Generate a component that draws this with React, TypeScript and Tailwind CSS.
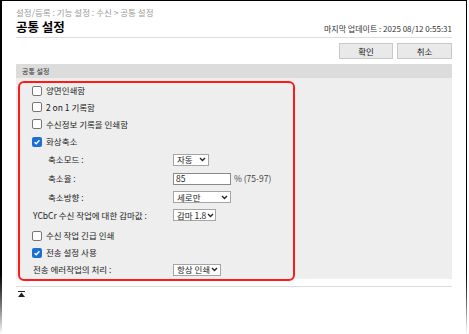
import React from "react";

const Check = ({ checked }: { checked?: boolean }) =>
  checked ? (
    <span className="flex size-[10px] shrink-0 items-center justify-center rounded-[2px] bg-[#1a6fd6]">
      <svg viewBox="0 0 10 10" className="size-[8px]">
        <path d="M2 5.2 L4.1 7.2 L8 2.8" fill="none" stroke="#fff" strokeWidth="1.8" />
      </svg>
    </span>
  ) : (
    <span className="size-[10px] shrink-0 rounded-[2px] border border-[#767676] bg-white" />
  );

const Chevron = () => (
  <svg viewBox="0 0 8 6" className="h-[5px] w-[7px] shrink-0">
    <path d="M1 1.2 L4 4.2 L7 1.2" fill="none" stroke="#222" strokeWidth="1.6" />
  </svg>
);

const Select = ({ value, width }: { value: string; width: string }) => (
  <div
    className={`flex h-[12px] items-center justify-between gap-[1px] whitespace-nowrap border border-[#a5a5a5] bg-white pl-[3px] pr-[2px] text-[8.5px] leading-none text-[#222] ${width}`}
  >
    <span>{value}</span>
    <Chevron />
  </div>
);

const CheckRow = ({ label, checked, h }: { label: string; checked?: boolean; h: string }) => (
  <div className={`flex items-center gap-[4px] pl-[16px] ${h}`}>
    <Check checked={checked} />
    <span>{label}</span>
  </div>
);

const FieldRow = ({
  label,
  indent,
  h,
  children,
}: {
  label: string;
  indent?: boolean;
  h: string;
  children: React.ReactNode;
}) => (
  <div className={`flex items-center pl-[17px] ${h}`}>
    <span className={`w-[140px] shrink-0 ${indent ? "pl-[15px]" : ""}`}>{label}</span>
    {children}
  </div>
);

export default function App() {
  return (
    <div className="relative flex h-[334px] w-[469px] bg-white font-['Noto_Sans_CJK_KR',sans-serif] text-[#222]">
      <div className="w-[2px] shrink-0 bg-linear-to-b from-black from-80% to-white" />
      <div className="flex w-[464px] flex-col border-t border-black px-[14px]">
        <div className="mt-[4px] h-[14px] text-[8.5px] leading-[14px] text-[#9a9a9a]">
          설정/등록 : 기능 설정 : 수신 &gt; 공통 설정
        </div>
        <div className="flex h-[19px] items-end justify-between border-b border-[#dcdcdc] pb-[2px]">
          <h1 className="text-[12.5px] font-bold leading-[16px] text-black">공통 설정</h1>
          <span className="text-[8px] leading-[12px] text-[#333]">마지막 업데이트 : 2025 08/12 0:55:31</span>
        </div>
        <div className="mt-[5px] flex justify-end gap-[4px]">
          <button className="h-[16px] w-[54px] border border-[#c8c8c8] bg-[#e9e9e9] text-[8.5px] leading-none text-[#222]">
            확인
          </button>
          <button className="h-[16px] w-[55px] border border-[#c8c8c8] bg-[#e9e9e9] text-[8.5px] leading-none text-[#222]">
            취소
          </button>
        </div>
        <div className="mt-[5px] flex h-[14px] items-center bg-[#dcdcdc] pl-[6px] text-[7px] text-[#333]">
          공통 설정
        </div>
        <div className="flex flex-col bg-[#eeeeee] pt-[4px] pb-[1px] text-[8.5px] leading-none">
          <CheckRow label="양면인쇄함" h="h-[17px]" />
          <CheckRow label="2 on 1 기록함" h="h-[16px]" />
          <CheckRow label="수신정보 기록을 인쇄함" h="h-[18px]" />
          <CheckRow label="화상축소" checked h="h-[17px]" />
          <FieldRow label="축소모드 :" indent h="h-[19px]">
            <Select value="자동" width="w-[36px]" />
          </FieldRow>
          <FieldRow label="축소율 :" indent h="h-[19px]">
            <div className="flex h-[12px] w-[58px] items-center border border-[#8a8a8a] bg-white pl-[2px]">85</div>
            <span className="ml-[3px] text-[#444]">% (75-97)</span>
          </FieldRow>
          <FieldRow label="축소방향 :" indent h="h-[18px]">
            <Select value="세로만" width="w-[58px]" />
          </FieldRow>
          <FieldRow label="YCbCr 수신 작업에 대한 감마값 :" h="h-[18px]">
            <Select value="감마 1.8" width="w-[43px]" />
          </FieldRow>
          <div className="h-[3px]" />
          <CheckRow label="수신 작업 긴급 인쇄" h="h-[17px]" />
          <CheckRow label="전송 설정 사용" checked h="h-[17px]" />
          <FieldRow label="전송 에러작업의 처리 :" h="h-[17px]">
            <Select value="항상 인쇄" width="w-[48px]" />
          </FieldRow>
        </div>
        <div className="mt-[7px] border-t border-[#dcdcdc] pt-[4px] pl-[2px]">
          <svg viewBox="0 0 7 6" className="h-[6px] w-[7px]">
            <rect x="0" y="0" width="7" height="1" fill="#222" />
            <path d="M3.5 1.5 L7 6 L0 6 Z" fill="#222" />
          </svg>
        </div>
      </div>
      <div className="w-[1px] shrink-0 bg-linear-to-b from-black from-80% to-white" />
      <div className="pointer-events-none absolute top-[81px] left-[18px] h-[200px] w-[277px] rounded-[6px] border-2 border-[#ff1a1a]" />
    </div>
  );
}
